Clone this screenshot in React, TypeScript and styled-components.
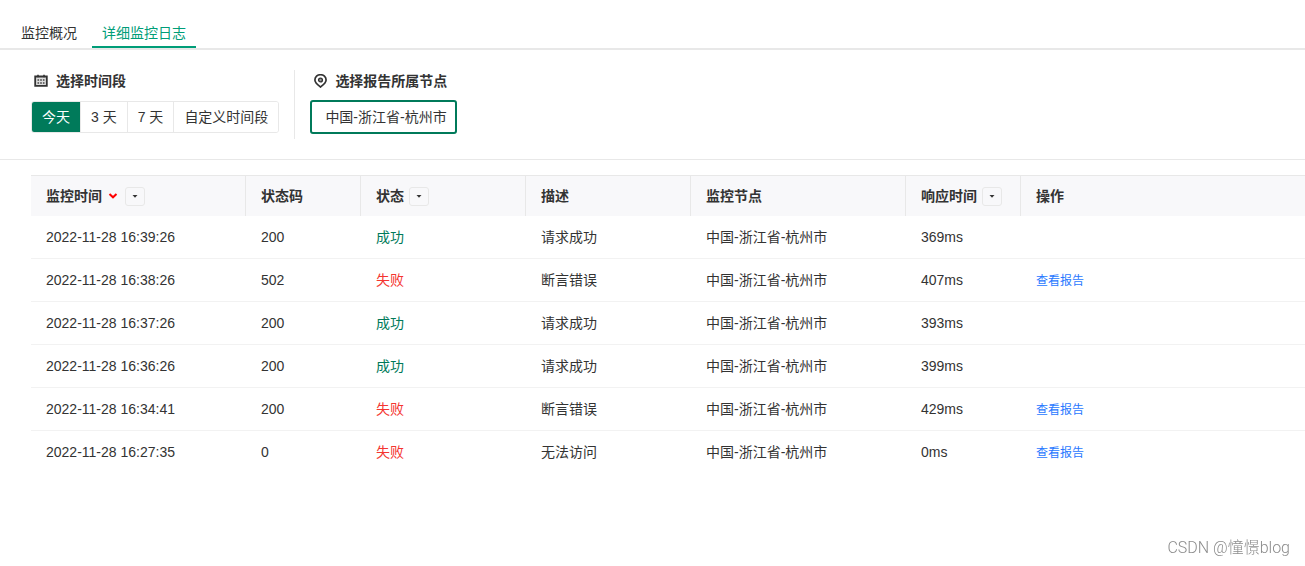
import React, { useState } from "react";
import styled, { createGlobalStyle } from "styled-components";

const GlobalStyle = createGlobalStyle`
  * { box-sizing: border-box; }
  body {
    margin: 0;
    background: #fff;
    color: #333;
    font-family: "Liberation Sans", "Noto Sans CJK SC", sans-serif;
    font-size: 14px;
    line-height: 20px;
  }
  button { font: inherit; color: inherit; margin: 0; cursor: pointer; }
`;

const Tabs = styled.nav`
  display: flex;
  gap: 5px;
  padding: 18px 11px 0;
  border-bottom: 2px solid #e8e8e8;
`;

const Tab = styled.a<{ $active?: boolean }>`
  height: 30px;
  padding: 5px 10px 0;
  border-bottom: 2px solid ${(p) => (p.$active ? "#009d78" : "transparent")};
  color: ${(p) => (p.$active ? "#009d78" : "#333")};
  text-decoration: none;
`;

const Filters = styled.section`
  display: flex;
  padding: 20px 31px;
  border-bottom: 1px solid #e8e8e8;
`;

const Filter = styled.div`
  height: 69px;
  & + & {
    margin-left: 15px;
    padding-left: 15px;
    border-left: 1px solid #e8e8e8;
  }
`;

const FilterTitle = styled.h2`
  display: flex;
  align-items: center;
  gap: 8px;
  height: 22px;
  margin: 0 0 8px;
  padding-left: 3px;
  font-size: 14px;
  font-weight: 700;
`;

const Segments = styled.div`
  display: inline-flex;
  height: 32px;
  margin-top: 1px;
  border: 1px solid #e8e8e8;
  border-radius: 3px;
  overflow: hidden;
`;

const Segment = styled.button<{ $active?: boolean }>`
  padding: 0 10px;
  border: 0;
  background: ${(p) => (p.$active ? "#007a5a" : "#fff")};
  color: ${(p) => (p.$active ? "#fff" : "#333")};
  & + & { border-left: 1px solid #e8e8e8; }
`;

const NodeButton = styled.button`
  height: 34px;
  padding: 0 8px 0 13px;
  border: 2px solid #007a5a;
  border-radius: 3px;
  background: #fff;
`;

const TableArea = styled.main`
  padding: 15px 0 0 31px;
`;

const Table = styled.table`
  width: 100%;
  table-layout: fixed;
  border-collapse: separate;
  border-spacing: 0;
  text-align: left;
`;

const HeadCell = styled.th`
  height: 41px;
  padding: 0 15px;
  border-top: 1px solid #e8e8e8;
  border-right: 1px solid #e8e8e8;
  background: #f8f8fa;
  &:last-child { border-right: 0; }
`;

const HeadContent = styled.div`
  display: flex;
  align-items: center;
`;

const MenuButton = styled.button`
  display: flex;
  align-items: center;
  justify-content: center;
  width: 20px;
  height: 19px;
  margin-left: 5px;
  padding: 0;
  border: 1px solid #e8e8e8;
  border-radius: 3px;
  background: #f8f8fa;
`;

const SortIcon = styled.svg`
  margin: 0 2px 0 6px;
`;

const Cell = styled.td`
  height: 43px;
  padding: 0 15px;
  border-bottom: 1px solid #f2f2f2;
  tr:last-child > & { border-bottom-color: transparent; }
`;

const Status = styled.span<{ $ok: boolean }>`
  color: ${(p) => (p.$ok ? "#007a5a" : "#f43530")};
`;

const ReportLink = styled.a`
  color: #2878ff;
  font-size: 12px;
  text-decoration: none;
`;

const Watermark = styled.div`
  position: fixed;
  right: 15px;
  bottom: 8px;
  color: #8c8c8c;
  font-family: Roboto, "Noto Sans CJK SC", sans-serif;
  font-size: 16px;
  font-weight: 300;
`;

const CalendarIcon = () => (
  <svg width="14" height="14" viewBox="0 0 14 14" aria-hidden="true">
    <path d="M1.200 2.500h11.600v9.300H1.200z" fill="#ddd" stroke="#333" strokeWidth="1.800" />
    <path d="M4 .8v2.400M10 .8v2.400" stroke="#333" strokeWidth="1.600" />
    <path d="M3.500 6h7M3.500 9h7" stroke="#444" strokeWidth="1.500" strokeDasharray="1.600 1.100" />
  </svg>
);

const PinIcon = () => (
  <svg width="14" height="14" viewBox="0 0 14 14" aria-hidden="true">
    <path
      d="M7.500 13C5 11 1.900 8.700 1.900 5.900a5.600 5.200 0 0 1 11.200 0C13.100 8.700 10 11 7.500 13z"
      fill="none"
      stroke="#333"
      strokeWidth="1.700"
    />
    <circle cx="7.500" cy="6" r="1.900" fill="#999" stroke="#333" strokeWidth="1.400" />
  </svg>
);

const Caret = () => (
  <svg width="6" height="3" viewBox="0 0 6 3" aria-hidden="true">
    <path d="M.5 0h5L3 2.800z" fill="#333" />
  </svg>
);

const columns = [
  { title: "监控时间", width: 215, menu: true, sorted: true },
  { title: "状态码", width: 115 },
  { title: "状态", width: 165, menu: true },
  { title: "描述", width: 165 },
  { title: "监控节点", width: 215 },
  { title: "响应时间", width: 115, menu: true },
  { title: "操作" },
];

const NODE = "中国-浙江省-杭州市";

const logs = [
  { time: "2022-11-28 16:39:26", code: 200, ok: true, text: "请求成功", cost: "369ms" },
  { time: "2022-11-28 16:38:26", code: 502, ok: false, text: "断言错误", cost: "407ms" },
  { time: "2022-11-28 16:37:26", code: 200, ok: true, text: "请求成功", cost: "393ms" },
  { time: "2022-11-28 16:36:26", code: 200, ok: true, text: "请求成功", cost: "399ms" },
  { time: "2022-11-28 16:34:41", code: 200, ok: false, text: "断言错误", cost: "429ms" },
  { time: "2022-11-28 16:27:35", code: 0, ok: false, text: "无法访问", cost: "0ms" },
];

const ranges = ["今天", "3 天", "7 天", "自定义时间段"];

export default function App() {
  const [range, setRange] = useState(ranges[0]);

  return (
    <>
      <GlobalStyle />
      <Tabs>
        <Tab href="#overview">监控概况</Tab>
        <Tab href="#logs" $active aria-current="page">详细监控日志</Tab>
      </Tabs>
      <Filters>
        <Filter>
          <FilterTitle><CalendarIcon />选择时间段</FilterTitle>
          <Segments>
            {ranges.map((r) => (
              <Segment key={r} type="button" $active={r === range} aria-pressed={r === range} onClick={() => setRange(r)}>
                {r}
              </Segment>
            ))}
          </Segments>
        </Filter>
        <Filter>
          <FilterTitle><PinIcon />选择报告所属节点</FilterTitle>
          <NodeButton type="button" aria-pressed="true">{NODE}</NodeButton>
        </Filter>
      </Filters>
      <TableArea>
        <Table>
          <colgroup>
            {columns.map((c) => <col key={c.title} width={c.width} />)}
          </colgroup>
          <thead>
            <tr>
              {columns.map((c) => (
                <HeadCell key={c.title} scope="col">
                  <HeadContent>
                    {c.title}
                    {c.sorted && (
                      <SortIcon width="10" height="6" viewBox="0 0 10 6" aria-hidden="true">
                        <path d="M1.500 1L5 4.300L8.500 1" fill="none" stroke="#f00" strokeWidth="2" />
                      </SortIcon>
                    )}
                    {c.menu && <MenuButton type="button" aria-label={c.title}><Caret /></MenuButton>}
                  </HeadContent>
                </HeadCell>
              ))}
            </tr>
          </thead>
          <tbody>
            {logs.map((l) => (
              <tr key={l.time}>
                <Cell>{l.time}</Cell>
                <Cell>{l.code}</Cell>
                <Cell><Status $ok={l.ok}>{l.ok ? "成功" : "失败"}</Status></Cell>
                <Cell>{l.text}</Cell>
                <Cell>{NODE}</Cell>
                <Cell>{l.cost}</Cell>
                <Cell>{!l.ok && <ReportLink href="#report">查看报告</ReportLink>}</Cell>
              </tr>
            ))}
          </tbody>
        </Table>
      </TableArea>
      <Watermark>CSDN @憧憬blog</Watermark>
    </>
  );
}
